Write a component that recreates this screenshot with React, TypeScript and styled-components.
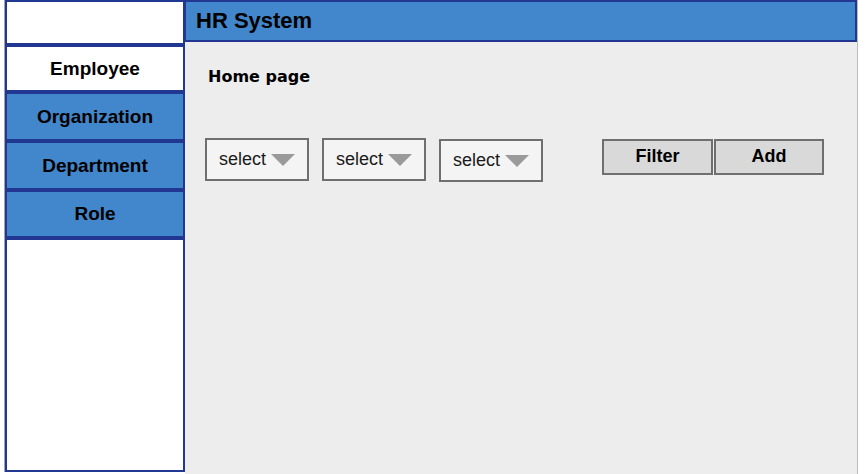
import React from "react";
import styled, { createGlobalStyle } from "styled-components";

const Global = createGlobalStyle`
  html, body { margin: 0; padding: 0; background: #ffffff; }
  body { font-family: "Liberation Sans", Arial, sans-serif; }
`;

const Page = styled.div`
  display: flex;
  align-items: flex-start;
  width: 866px;
  height: 474px;
  padding-left: 4px;
  box-sizing: border-box;
  overflow: hidden;
`;

const Sidebar = styled.nav`
  display: flex;
  flex-direction: column;
  width: 181px;
  height: 472px;
  border-left: 1px solid #a3a3a8;
  box-sizing: border-box;
`;

const NavItem = styled.div<{ $h?: number; $active?: boolean; $grow?: boolean }>`
  display: flex;
  align-items: center;
  justify-content: center;
  box-sizing: border-box;
  height: ${(p) => (p.$h ? `${p.$h}px` : "auto")};
  flex: ${(p) => (p.$grow ? "1" : "none")};
  border: 2px solid #213791;
  background: ${(p) => (p.$active ? "#ffffff" : "#4286cb")};
  font-weight: bold;
  font-size: 19px;
  color: #000;
  & + & { margin-top: 0; }
`;

const Main = styled.main`
  display: flex;
  flex-direction: column;
  width: 673px;
  height: 474px;
  background: #ededed;
  border-right: 1px solid #bdbdbd;
  box-sizing: border-box;
`;

const Header = styled.header`
  display: flex;
  align-items: center;
  height: 42px;
  margin-left: -1px;
  padding-left: 10px;
  padding-bottom: 1px;
  box-sizing: border-box;
  background: #4286cb;
  border: 2px solid #213791;
  font-weight: bold;
  font-size: 22px;
  color: #000;
`;

const Content = styled.section`
  display: flex;
  flex-direction: column;
  padding: 25px 0 0 20px;
`;

const Title = styled.h1`
  margin: 0 0 52px 3px;
  font-family: "DejaVu Sans", sans-serif;
  font-weight: bold;
  font-size: 16px;
  line-height: 19px;
  color: #000;
`;

const Toolbar = styled.div`
  display: flex;
  align-items: flex-start;
`;

const Select = styled.div<{ $offset?: number }>`
  display: flex;
  align-items: center;
  gap: 5px;
  width: 104px;
  height: 43px;
  margin-top: ${(p) => p.$offset ?? 0}px;
  margin-right: 13px;
  padding-left: 12px;
  box-sizing: border-box;
  background: #f4f4f4;
  border: 2px solid #6f6f6f;
  font-size: 18px;
  color: #1a1a1a;
`;

const Caret = styled.span`
  width: 0;
  height: 0;
  border-left: 12px solid transparent;
  border-right: 12px solid transparent;
  border-top: 12px solid #9a9a9a;
`;

const Button = styled.button<{ $w: number }>`
  width: ${(p) => p.$w}px;
  height: 36px;
  margin-top: 1px;
  padding: 0 0 2px;
  box-sizing: border-box;
  background: #d9d9d9;
  border: 2px solid #6f6f6f;
  font-family: "Liberation Sans", Arial, sans-serif;
  font-weight: bold;
  font-size: 18px;
  color: #000;
`;

const Spacer = styled.div`
  width: 46px;
`;

const ButtonGroup = styled.div`
  display: flex;
  gap: 1px;
`;

export default function App() {
  return (
    <>
      <Global />
      <Page>
        <Sidebar>
          <NavItem $h={45} $active />
          <NavItem $h={47} $active>Employee</NavItem>
          <NavItem $h={49}>Organization</NavItem>
          <NavItem $h={49}>Department</NavItem>
          <NavItem $h={48}>Role</NavItem>
          <NavItem $grow $active />
        </Sidebar>
        <Main>
          <Header>HR System</Header>
          <Content>
            <Title>Home page</Title>
            <Toolbar>
              <Select>select<Caret /></Select>
              <Select>select<Caret /></Select>
              <Select $offset={1}>select<Caret /></Select>
              <Spacer />
              <ButtonGroup>
                <Button $w={111}>Filter</Button>
                <Button $w={110}>Add</Button>
              </ButtonGroup>
            </Toolbar>
          </Content>
        </Main>
      </Page>
    </>
  );
}
